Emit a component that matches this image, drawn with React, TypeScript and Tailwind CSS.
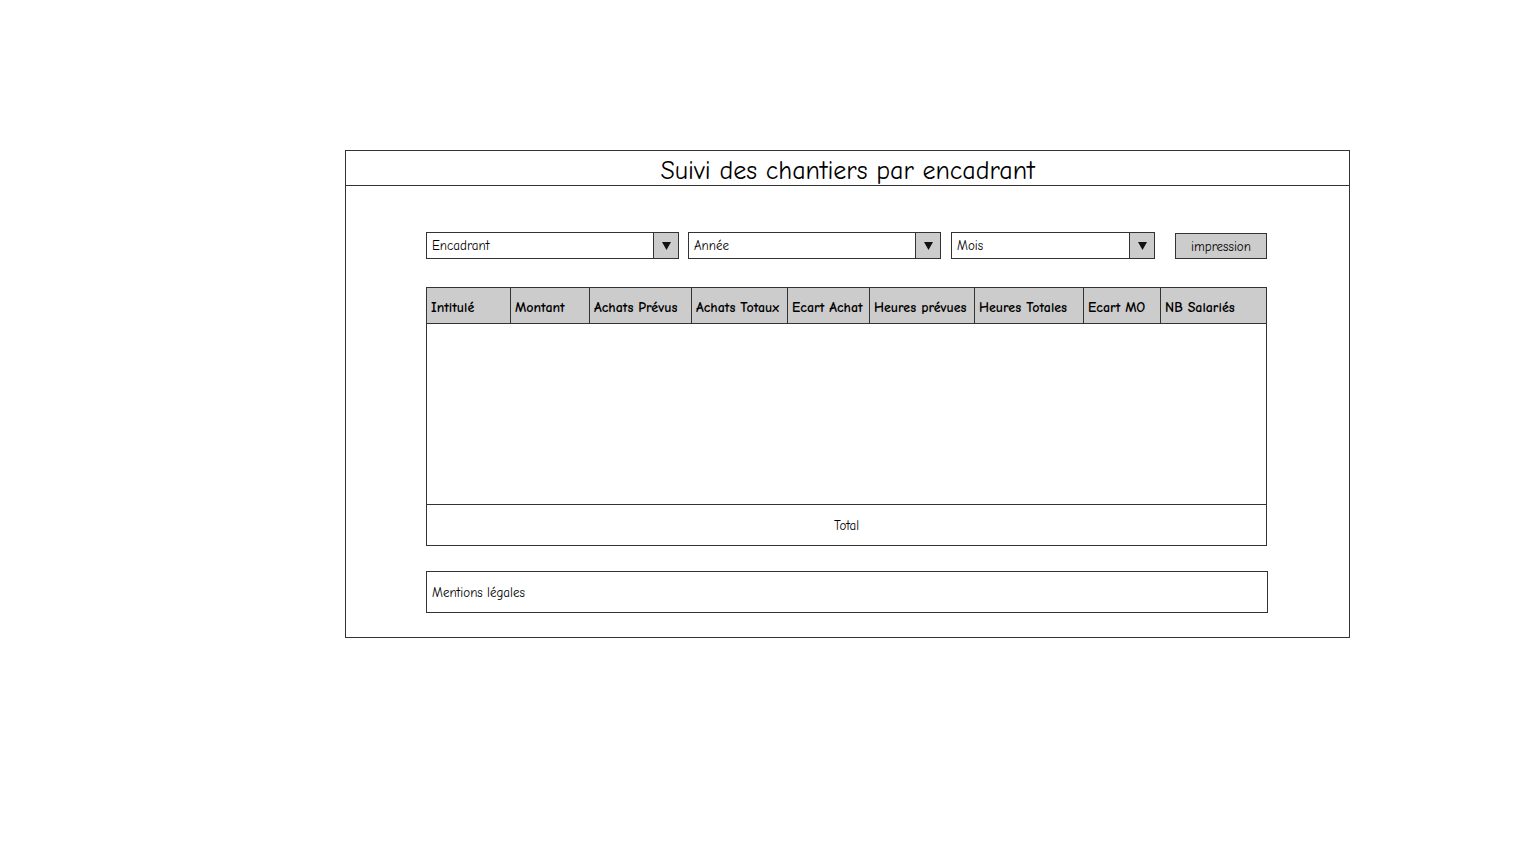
import React from 'react';

const font = { fontFamily: '"Comic Sans MS", "Comic Neue", "DejaVu Sans", sans-serif' };

const columns = [
  { label: 'Intitulé', w: 'w-[84px]' },
  { label: 'Montant', w: 'w-[79px]' },
  { label: 'Achats Prévus', w: 'w-[102px]' },
  { label: 'Achats Totaux', w: 'w-[96px]' },
  { label: 'Ecart Achat', w: 'w-[82px]' },
  { label: 'Heures prévues', w: 'w-[105px]' },
  { label: 'Heures Totales', w: 'w-[109px]' },
  { label: 'Ecart MO', w: 'w-[77px]' },
  { label: 'NB Salariés', w: 'flex-1' },
];

const Dropdown = ({ label, width }: { label: string; width: string }) => (
  <div className={`flex h-[27px] ${width} border border-[#333] bg-white`}>
    <div className="flex flex-1 items-center pl-[5px] pt-[1px] text-[13px] text-black">{label}</div>
    <div className="flex w-[25px] items-center justify-center border-l border-[#333] bg-[#cccccc]">
      <svg width="9" height="8" viewBox="0 0 9 8">
        <path d="M0 0 H9 L4.5 8 Z" fill="#111" />
      </svg>
    </div>
  </div>
);

export default function App() {
  return (
    <div className="min-h-[848px] bg-white pl-[345px] pt-[150px]" style={font}>
      <div className="flex w-[1005px] flex-col border border-[#333]">
        <div className="flex h-[35px] items-center justify-center border-b border-[#333] pt-[5px] text-[26px] leading-none text-black">
          Suivi des chantiers par encadrant
        </div>

        <div className="flex flex-col px-[80px] pb-[24px] pt-[46px]">
          <div className="flex items-center">
            <Dropdown label="Encadrant" width="w-[253px]" />
            <div className="w-[9px]" />
            <Dropdown label="Année" width="w-[253px]" />
            <div className="w-[10px]" />
            <Dropdown label="Mois" width="w-[204px]" />
            <div className="w-[20px]" />
            <button className="flex h-[26px] w-[92px] items-center justify-center border border-[#333] bg-[#cccccc] pt-[2px] text-[13px] text-black">
              impression
            </button>
          </div>

          <div className="mt-[28px] flex w-[841px] flex-col border border-[#333]">
            <div className="flex h-[36px] border-b border-[#333] bg-[#cccccc]">
              {columns.map((c, i) => (
                <div
                  key={c.label}
                  className={`flex items-center overflow-hidden whitespace-nowrap pl-[4px] pt-[3px] text-[14px] font-bold text-black ${c.w} ${i < columns.length - 1 ? 'border-r border-[#333]' : ''}`}
                >
                  {c.label}
                </div>
              ))}
            </div>
            <div className="h-[180px]" />
            <div className="flex h-[41px] items-center justify-center border-t border-[#333] pt-[1px] text-[13px] text-black">
              Total
            </div>
          </div>

          <div className="mt-[25px] flex h-[42px] w-[842px] items-center border border-[#333] pl-[5px] pt-[1px] text-[13px] text-black">
            Mentions légales
          </div>
        </div>
      </div>
    </div>
  );
}
